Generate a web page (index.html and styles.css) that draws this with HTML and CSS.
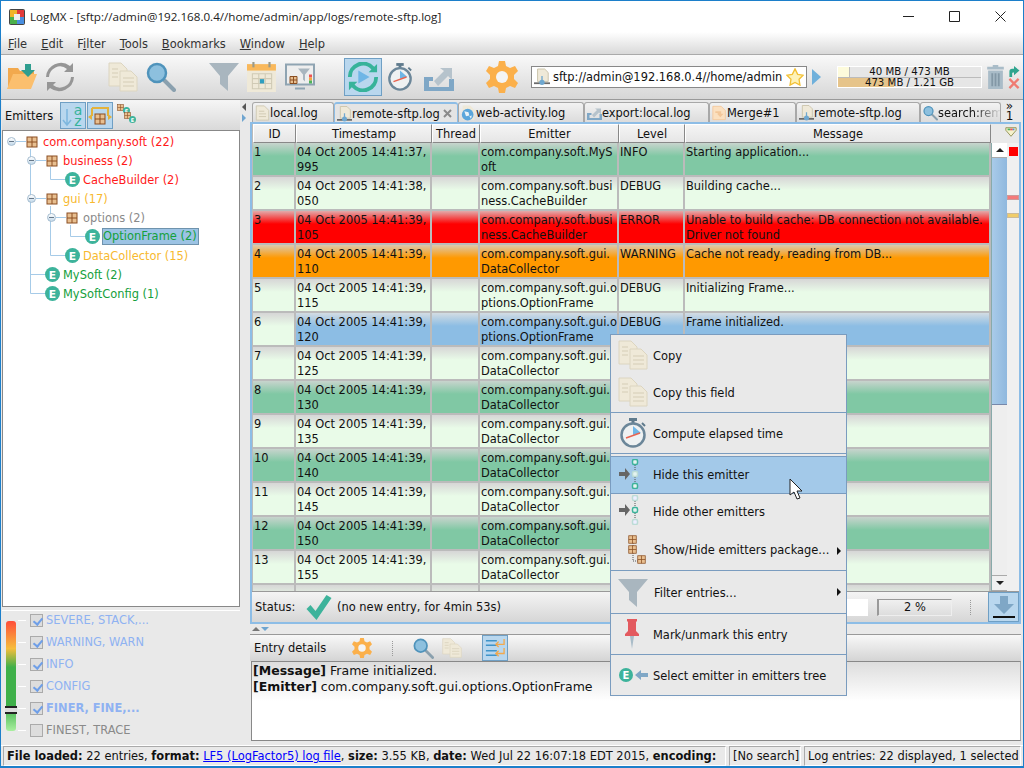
FILE: index.html
```html
<!DOCTYPE html>
<html>

<head lang="en">
    <meta charset="UTF-8">
    <title>LogMX</title>
    <link rel="stylesheet" href="styles.css">
</head>

<body>
    <!-- icon sheet -->
    <svg class="icon-sheet" width="0" height="0">
        <symbol id="i-folder" viewBox="0 0 30 26">
            <path d="M1 4h10l2 3h14v6H7L1 24z" fill="#f2a94e" />
            <path d="M6 10h24l-6 15H0z" fill="#fbbf6e" />
            <path d="M18 0h6v6h4l-7 7-7-7h4z" fill="#2f9e8f" />
        </symbol>
        <symbol id="i-refresh" viewBox="0 0 30 30">
            <path d="M4 15a11 11 0 0 1 18-8l-3 3h9V1l-3 3A15 15 0 0 0 1 15z" fill="#969696" />
            <path d="M26 15a11 11 0 0 1-18 8l3-3H2v9l3-3a15 15 0 0 0 24-11z" fill="#969696" />
        </symbol>
        <symbol id="i-docs" viewBox="0 0 30 30">
            <path d="M1 1h12l6 6v17H1z" fill="#efe9d8" stroke="#dcd5c0" />
            <path d="M12 9h11l6 6v14H12z" fill="#efe9d8" stroke="#dcd5c0" />
            <path d="M4 7h6M4 11h6M4 15h6M15 16h11M15 20h11M15 24h11" stroke="#d5cdb6" />
        </symbol>
        <symbol id="i-search" viewBox="0 0 30 30">
            <path d="M18 18l10 10" stroke="#8aa0ae" stroke-width="4" stroke-linecap="round" />
            <circle cx="11" cy="11" r="9" fill="#8dc0de" stroke="#4f93bb" stroke-width="2.5" />
        </symbol>
        <symbol id="i-funnel" viewBox="0 0 30 28">
            <path d="M0 0h30L19 13v15l-8-7v-8z" fill="#a9b6bf" />
        </symbol>
        <symbol id="i-calendar" viewBox="0 0 28 28">
            <rect y="2" width="27" height="26" fill="#efe9d8" />
            <rect y="2" width="27" height="6" fill="#f9b85b" />
            <rect x="5" width="2" height="5" fill="#9a9a8a" />
            <rect x="20" width="2" height="5" fill="#9a9a8a" />
            <path d="M5 11h18v14H5zM5 15.500h18M5 20h18M11 11v14M17 11v14" fill="none" stroke="#d0cab5" />
            <rect x="12" y="16" width="4" height="4" fill="#2f9fc0" />
        </symbol>
        <symbol id="i-monitor" viewBox="0 0 30 27">
            <rect x="1" y="1" width="28" height="20" fill="#eee" stroke="#8fa4b2" stroke-width="2" />
            <path d="M10 24h10v2H10z" fill="#8fa4b2" />
            <path d="M13 5h12l-5 6v7l-2-2v-5z" fill="#a9b6bf" />
            <path d="M5 13h7v7H5z" fill="#e8bf90" stroke="#8b4f22" />
            <path d="M8.500 13v7M5 16.500h7" stroke="#8b4f22" />
            <path d="M24 11h3v3h-3z" fill="#e55" />
            <path d="M24 14h3v3h-3z" fill="#f5a742" />
            <path d="M24 17h3v3h-3z" fill="#4db35a" />
        </symbol>
        <symbol id="i-sync" viewBox="0 0 32 32">
            <path d="M4 16a12 12 0 0 1 21-8l-3 3h9V2l-3 3A16 16 0 0 0 0 16z" fill="#37b39a" />
            <path d="M28 16a12 12 0 0 1-21 8l3-3H1v9l3-3a16 16 0 0 0 28-11z" fill="#37b39a" />
            <path d="M11 9l12 7-12 7z" fill="#6fb6e6" />
        </symbol>
        <symbol id="i-watch" viewBox="0 0 28 30">
            <rect x="10" width="8" height="3" fill="#5f7a8c" />
            <rect x="12.500" y="2" width="3" height="4" fill="#5f7a8c" />
            <path d="M23 5l3 3" stroke="#5f7a8c" stroke-width="2" />
            <circle cx="14" cy="17" r="11.500" fill="#eef1f2" stroke="#6b8699" stroke-width="2.500" />
            <path d="M14 8l8 7-8 2z" fill="#6fb6e6" />
            <path d="M7 20l14-5" stroke="#e8634f" stroke-width="1.500" />
        </symbol>
        <symbol id="i-export" viewBox="0 0 30 28">
            <path d="M0 14h9v4H5v6h20v-8h5v12H0z" fill="#7fa7c6" />
            <path d="M10 18l10-10-4-3h12v12l-4-4-10 10z" fill="#b6c3cc" />
        </symbol>
        <symbol id="i-gear" viewBox="0 0 32 32">
            <path d="M13 0h6l1 5 4 2 5-2 3 5-4 4v4l4 4-3 5-5-2-4 2-1 5h-6l-1-5-4-2-5 2-3-5 4-4v-4L0 10l3-5 5 2 4-2z" fill="#fbb04b" />
            <circle cx="16" cy="16" r="6" fill="#f4f4f4" />
        </symbol>
        <symbol id="i-netfile" viewBox="0 0 18 18">
            <path d="M4 0h8l4 4v10H4z" fill="#efe9d8" stroke="#c8c0a6" />
            <path d="M0 16h18" stroke="#6b6b6b" stroke-width="2" />
            <circle cx="9" cy="15" r="3" fill="#6fa8d0" />
            <path d="M9 8v5" stroke="#6fa8d0" stroke-width="1.500" />
        </symbol>
        <symbol id="i-file" viewBox="0 0 16 18">
            <path d="M1 1h9l5 5v11H1z" fill="#efe9d8" stroke="#cfc8b0" />
            <path d="M4 7h6M4 10h8M4 13h8" stroke="#cfc8b0" />
        </symbol>
        <symbol id="i-globe" viewBox="0 0 18 18">
            <path d="M2 0h9l5 5v12H2z" fill="#efe9d8" />
            <circle cx="8" cy="11" r="7" fill="#5aa6dc" />
            <path d="M4 7l5 1 1 4-4 1zM10 13l3-1-1 4z" fill="#e9f2f7" />
        </symbol>
        <symbol id="i-merge" viewBox="0 0 18 18">
            <path d="M1 1h10l5 5v11H1z" fill="#fbe0c0" stroke="#f3c79a" />
            <path d="M4 7h7v3h3l-4 4-4-4h1V9H4z" fill="#f3c79a" />
        </symbol>
        <symbol id="i-star" viewBox="0 0 20 20">
            <path d="M10 1l3 6 6 1-4.500 4.500 1 6.500-5.500-3-5.500 3 1-6.500L1 8l6-1z" fill="#fdf2b8" stroke="#f2c035" stroke-width="1.500" />
        </symbol>
        <symbol id="i-trash" viewBox="0 0 18 26">
            <path d="M6 0h6v2h6v3H0V2h6z" fill="#a9bcc8" />
            <path d="M1 6h16v20H1z" fill="#a9bcc8" />
            <path d="M5.500 9v14M9 9v14M12.500 9v14" stroke="#8398a6" stroke-width="2" />
        </symbol>
        <symbol id="i-pkg" viewBox="0 0 12 12">
            <rect x="1" y="1" width="10" height="10" fill="#e8bf90" stroke="#8b4f22" />
            <path d="M6 1v10M1 6h10" stroke="#8b4f22" />
        </symbol>
        <symbol id="i-emitter" viewBox="0 0 14 14">
            <circle cx="7" cy="7" r="7" fill="#3db39b" />
            <text x="7" y="11" text-anchor="middle" class="icon-e">E</text>
        </symbol>
        <symbol id="i-tick" viewBox="0 0 26 26">
            <path d="M1 15l4-4 5 6L21 1l5 3-15 22z" fill="#3db39b" />
        </symbol>
        <symbol id="i-hide" viewBox="0 0 30 30">
            <path d="M1 13h6V9l5 6-5 6v-4H1z" fill="#666" />
            <path d="M17 6v18" stroke="#555" stroke-dasharray="1 1" />
            <rect x="14.500" y=".5" width="5" height="5" rx="1.500" fill="#e4f3ef" stroke="#3db39b" stroke-width="1.500" />
            <rect x="14.500" y="12.500" width="5" height="5" rx="1.500" fill="#e4f3ef" stroke="#bcdcd6" stroke-width="1.500" />
            <rect x="14.500" y="24.500" width="5" height="5" rx="1.500" fill="#e4f3ef" stroke="#3db39b" stroke-width="1.500" />
        </symbol>
        <symbol id="i-hide-other" viewBox="0 0 30 30">
            <path d="M1 13h6V9l5 6-5 6v-4H1z" fill="#666" />
            <path d="M17 6v18" stroke="#555" stroke-dasharray="1 1" />
            <rect x="14.500" y=".5" width="5" height="5" rx="1.500" fill="#eef" stroke="#bcdcd6" stroke-width="1.500" />
            <rect x="14.500" y="12.500" width="5" height="5" rx="1.500" fill="#e4f3ef" stroke="#3db39b" stroke-width="1.500" />
            <rect x="14.500" y="24.500" width="5" height="5" rx="1.500" fill="#eef" stroke="#bcdcd6" stroke-width="1.500" />
        </symbol>
        <symbol id="i-pin" viewBox="0 0 14 30">
            <path d="M2 0h10v2l-1 1v9l3 3v2H0v-2l3-3V3L2 2z" fill="#e35a5f" />
            <path d="M5 17h4l-2 13z" fill="#a9bcc8" />
        </symbol>
        <symbol id="i-wrap" viewBox="0 0 22 22">
            <path d="M1 3h12M1 8h12M1 14h12M1 19h12" stroke="#3f94c9" stroke-width="1.500" />
            <path d="M21 1v6H12M15 4l-3 3 3 3M21 11v6H12M15 14l-3 3 3 3" fill="none" stroke="#f2a94e" stroke-width="1.500" />
        </symbol>
    </svg>

    <div class="window">
        <!-- title -->
        <header class="titlebar">
            <svg class="app-logo" width="16" height="16" viewBox="0 0 16 16">
                <rect width="16" height="16" rx="2" fill="#444" />
                <rect x="1" y="1" width="7" height="7" fill="#f0b428" />
                <rect x="8" y="1" width="7" height="7" fill="#e23b3b" />
                <rect x="1" y="8" width="7" height="7" fill="#4bb04a" />
                <rect x="8" y="8" width="7" height="7" fill="#4a8fe0" />
                <rect x="5" y="5" width="6" height="6" fill="#eee" />
            </svg>
            <span class="title-text">LogMX - [sftp://admin@192.168.0.4//home/admin/app/logs/remote-sftp.log]</span>
            <div class="win-buttons">
                <svg width="11" height="11" viewBox="0 0 11 11"><path d="M0 5.500h11" stroke="#222" /></svg>
                <svg width="11" height="11" viewBox="0 0 11 11"><path d="M.5.500h10v10H.5z" fill="none" stroke="#222" /></svg>
                <svg width="11" height="11" viewBox="0 0 11 11"><path d="M.5.500l10 10M10.500.500l-10 10" stroke="#222" /></svg>
            </div>
        </header>

        <!-- menu -->
        <nav class="menubar">
            <span><u>F</u>ile</span>
            <span><u>E</u>dit</span>
            <span>F<u>i</u>lter</span>
            <span><u>T</u>ools</span>
            <span><u>B</u>ookmarks</span>
            <span><u>W</u>indow</span>
            <span><u>H</u>elp</span>
        </nav>

        <!-- toolbar -->
        <div class="toolbar">
            <div class="tool-group">
                <svg class="tool"><use href="#i-folder" /></svg>
                <svg class="tool"><use href="#i-refresh" /></svg>
            </div>
            <div class="tool-group">
                <svg class="tool"><use href="#i-docs" /></svg>
                <svg class="tool"><use href="#i-search" /></svg>
            </div>
            <div class="tool-group">
                <svg class="tool"><use href="#i-funnel" /></svg>
                <svg class="tool"><use href="#i-calendar" /></svg>
                <svg class="tool"><use href="#i-monitor" /></svg>
            </div>
            <div class="tool-group tool-group-run">
                <div class="tool-on"><svg class="tool"><use href="#i-sync" /></svg></div>
                <svg class="tool tool-watch"><use href="#i-watch" /></svg>
                <svg class="tool tool-export"><use href="#i-export" /></svg>
            </div>
            <svg class="tool-gear"><use href="#i-gear" /></svg>
            <div class="url-box">
                <svg class="url-icon"><use href="#i-netfile" /></svg>
                <span class="url-text">sftp://admin@192.168.0.4//home/admin</span>
                <svg class="url-star"><use href="#i-star" /></svg>
            </div>
            <div class="url-go"></div>
            <div class="memory">
                <div class="mem-line"><i class="mem-fill mem-fill-a"></i><span>40 MB / 473 MB</span></div>
                <div class="mem-line"><i class="mem-fill mem-fill-b"></i><span>473 MB / 1.21 GB</span></div>
            </div>
            <svg class="tool-trash"><use href="#i-trash" /></svg>
            <div class="mini-actions">
                <svg width="12" height="11" viewBox="0 0 12 12"><path d="M1 12V6q0-3 3-3h2V0l6 5-6 5V7H5q-1 0-1 1v4z" fill="#2fa58f" /></svg>
                <svg width="12" height="11" viewBox="0 0 12 12"><path d="M1 1l10 10M11 1L1 11" stroke="#ef7b72" stroke-width="2.500" /></svg>
            </div>
        </div>

        <div class="main">
            <!-- left side -->
            <aside class="left">
                <div class="emitters-bar">
                    <span class="emitters-label">Emitters</span>
                    <div class="tool-on tool-on-small">
                        <svg width="22" height="24" viewBox="0 0 22 24">
                            <path d="M5 5v16M1 16l4 5 4-5" fill="none" stroke="#7db7de" stroke-width="1.500" />
                            <text x="16" y="11" text-anchor="middle" class="sort-a">a</text>
                            <text x="16" y="22" text-anchor="middle" class="sort-a">z</text>
                        </svg>
                    </div>
                    <div class="tool-on tool-on-small">
                        <svg width="24" height="22" viewBox="0 0 24 22">
                            <path d="M4 3h16v8M4 3v8" fill="none" stroke="#e3b23c" stroke-width="2" />
                            <path d="M0 12l4-3v6zM24 12l-4-3v6z" fill="#e3b23c" />
                            <use href="#i-pkg" x="6" y="8" width="12" height="12" />
                        </svg>
                    </div>
                    <svg class="emitters-hier" width="20" height="20" viewBox="0 0 20 20">
                        <use href="#i-pkg" width="7" height="7" />
                        <use href="#i-emitter" x="6" y="3" width="7" height="7" />
                        <use href="#i-pkg" x="7" y="8" width="7" height="7" />
                        <use href="#i-emitter" x="12" y="12" width="7" height="7" />
                    </svg>
                </div>

                <div class="tree">
                    <svg class="tree-lines" width="120" height="170">
                        <path d="M13 10.500H23M27.500 18v144.500H42M27.500 143.500H42M33 29.500H43M47.500 36v12.500H62M33 67.500H43M47.500 75v49.500H62M53 86.500H63M67.500 94v11.500H82" fill="none" stroke="#a6cbe8" />
                    </svg>
                    <div class="tree-row t0"><i class="toggle"></i><svg class="t-ic"><use href="#i-pkg" /></svg><span class="c-red">com.company.soft (22)</span></div>
                    <div class="tree-row t1"><i class="toggle"></i><svg class="t-ic"><use href="#i-pkg" /></svg><span class="c-red">business (2)</span></div>
                    <div class="tree-row t2"><svg class="t-em"><use href="#i-emitter" /></svg><span class="c-red">CacheBuilder (2)</span></div>
                    <div class="tree-row t1"><i class="toggle"></i><svg class="t-ic"><use href="#i-pkg" /></svg><span class="c-yellow">gui (17)</span></div>
                    <div class="tree-row t2b"><i class="toggle"></i><svg class="t-ic"><use href="#i-pkg" /></svg><span class="c-gray">options (2)</span></div>
                    <div class="tree-row t3"><svg class="t-em"><use href="#i-emitter" /></svg><span class="c-green tree-sel">OptionFrame (2)</span></div>
                    <div class="tree-row t2"><svg class="t-em"><use href="#i-emitter" /></svg><span class="c-yellow">DataCollector (15)</span></div>
                    <div class="tree-row t1b"><svg class="t-em"><use href="#i-emitter" /></svg><span class="c-green">MySoft (2)</span></div>
                    <div class="tree-row t1b"><svg class="t-em"><use href="#i-emitter" /></svg><span class="c-green">MySoftConfig (1)</span></div>
                </div>

                <div class="levels">
                    <div class="level-bar"><i class="level-knob"></i></div>
                    <div class="level-list">
                        <div class="level"><i class="level-tick"></i><b class="box on"></b>SEVERE, STACK,...</div>
                        <div class="level"><i class="level-tick"></i><b class="box on"></b>WARNING, WARN</div>
                        <div class="level"><i class="level-tick"></i><b class="box on"></b>INFO</div>
                        <div class="level"><i class="level-tick"></i><b class="box on"></b>CONFIG</div>
                        <div class="level level-bold"><i class="level-tick"></i><b class="box on"></b>FINER, FINE,...</div>
                        <div class="level level-off"><i class="level-tick"></i><b class="box"></b>FINEST, TRACE</div>
                    </div>
                </div>
            </aside>

            <div class="split-v">
                <i class="arrow-l"></i>
                <i class="arrow-r"></i>
            </div>

            <!-- right side -->
            <section class="right">
                <div class="tabs">
                    <div class="tab tab-a"><svg class="tab-ic"><use href="#i-file" /></svg>local.log</div>
                    <div class="tab tab-b tab-on"><svg class="tab-ic"><use href="#i-netfile" /></svg>remote-sftp.log<svg class="tab-x" width="9" height="9" viewBox="0 0 9 9"><path d="M1 1l7 7M8 1L1 8" stroke="#8a8a8a" stroke-width="2" /></svg></div>
                    <div class="tab tab-c"><svg class="tab-ic"><use href="#i-globe" /></svg>web-activity.log</div>
                    <div class="tab tab-d"><svg class="tab-ic"><use href="#i-export" /></svg>export:local.log</div>
                    <div class="tab tab-e"><svg class="tab-ic"><use href="#i-merge" /></svg>Merge#1</div>
                    <div class="tab tab-f"><svg class="tab-ic"><use href="#i-netfile" /></svg>remote-sftp.log</div>
                    <div class="tab tab-g"><svg class="tab-ic"><use href="#i-search" /></svg><span class="tab-fade">search:rem</span></div>
                    <div class="tab-more"><span>»</span><span>1</span></div>
                </div>

                <div class="tab-body">
                    <div class="log-area">
                        <div class="log-clip">
                            <table class="log">
                                <colgroup>
                                    <col class="c-id"><col class="c-ts"><col class="c-th"><col class="c-em"><col class="c-lv"><col class="c-ms">
                                </colgroup>
                                <thead>
                                    <tr><th>ID</th><th>Timestamp</th><th>Thread</th><th>Emitter</th><th>Level</th><th>Message</th></tr>
                                </thead>
                                <tbody>
                                    <tr class="r-info"><td>1</td><td>04 Oct 2005 14:41:37,<br>995</td><td></td><td>com.company.soft.MyS<br>oft</td><td>INFO</td><td>Starting application...</td></tr>
                                    <tr class="r-debug"><td>2</td><td>04 Oct 2005 14:41:38,<br>050</td><td></td><td>com.company.soft.busi<br>ness.CacheBuilder</td><td>DEBUG</td><td>Building cache...</td></tr>
                                    <tr class="r-error"><td>3</td><td>04 Oct 2005 14:41:39,<br>105</td><td></td><td>com.company.soft.busi<br>ness.CacheBuilder</td><td>ERROR</td><td>Unable to build cache: DB connection not available.<br>Driver not found</td></tr>
                                    <tr class="r-warn"><td>4</td><td>04 Oct 2005 14:41:39,<br>110</td><td></td><td>com.company.soft.gui.<br>DataCollector</td><td>WARNING</td><td>Cache not ready, reading from DB...</td></tr>
                                    <tr class="r-debug"><td>5</td><td>04 Oct 2005 14:41:39,<br>115</td><td></td><td>com.company.soft.gui.o<br>ptions.OptionFrame</td><td>DEBUG</td><td>Initializing Frame...</td></tr>
                                    <tr class="r-sel"><td>6</td><td>04 Oct 2005 14:41:39,<br>120</td><td></td><td>com.company.soft.gui.o<br>ptions.OptionFrame</td><td>DEBUG</td><td>Frame initialized.</td></tr>
                                    <tr class="r-debug"><td>7</td><td>04 Oct 2005 14:41:39,<br>125</td><td></td><td>com.company.soft.gui.<br>DataCollector</td><td>DEBUG</td><td></td></tr>
                                    <tr class="r-info"><td>8</td><td>04 Oct 2005 14:41:39,<br>130</td><td></td><td>com.company.soft.gui.<br>DataCollector</td><td>INFO</td><td></td></tr>
                                    <tr class="r-debug"><td>9</td><td>04 Oct 2005 14:41:39,<br>135</td><td></td><td>com.company.soft.gui.<br>DataCollector</td><td>DEBUG</td><td></td></tr>
                                    <tr class="r-info"><td>10</td><td>04 Oct 2005 14:41:39,<br>140</td><td></td><td>com.company.soft.gui.<br>DataCollector</td><td>INFO</td><td></td></tr>
                                    <tr class="r-debug"><td>11</td><td>04 Oct 2005 14:41:39,<br>145</td><td></td><td>com.company.soft.gui.<br>DataCollector</td><td>DEBUG</td><td></td></tr>
                                    <tr class="r-info"><td>12</td><td>04 Oct 2005 14:41:39,<br>150</td><td></td><td>com.company.soft.gui.<br>DataCollector</td><td>INFO</td><td></td></tr>
                                    <tr class="r-debug"><td>13</td><td>04 Oct 2005 14:41:39,<br>155</td><td></td><td>com.company.soft.gui.<br>DataCollector</td><td>DEBUG</td><td></td></tr>
                                    <tr class="r-debug r-cut"><td></td><td></td><td></td><td></td><td></td><td></td></tr>
                                </tbody>
                            </table>
                        </div>
                        <div class="scroll-side">
                            <div class="corner">
                                <svg width="12" height="12" viewBox="0 0 14 12">
                                    <path d="M1 1h12v3L7 11 1 4z" fill="#f6f2cc" stroke="#8a8a4a" />
                                    <path d="M3 2h3v2H3z" fill="#4db35a" /><path d="M6 2h3v2H6z" fill="#e55" /><path d="M9 2h2v2H9z" fill="#4a8fe0" />
                                </svg>
                            </div>
                            <div class="scroll-cols">
                                <div class="scrollbar">
                                    <div class="sb-btn"><i class="up"></i></div>
                                    <div class="sb-thumb"></div>
                                    <div class="sb-track"></div>
                                    <div class="sb-btn sb-down"><i class="down"></i></div>
                                </div>
                                <div class="markers">
                                    <i class="mark-red"></i>
                                    <i class="mark-pink"></i>
                                    <i class="mark-yellow"></i>
                                </div>
                            </div>
                        </div>
                    </div>

                    <div class="status-row">
                        <span class="status-label">Status:</span>
                        <svg class="status-tick"><use href="#i-tick" /></svg>
                        <span class="status-text">(no new entry, for 4min 53s)</span>
                        <div class="status-white"></div>
                        <div class="status-pct">2 %</div>
                        <i class="dots"></i>
                        <div class="tool-on tool-down">
                            <svg width="22" height="22" viewBox="0 0 22 22">
                                <path d="M7 0h8v8h6L11 18 1 8h6z" fill="#7fa7c6" />
                                <path d="M0 21h22" stroke="#111" stroke-width="2" />
                            </svg>
                        </div>
                    </div>
                </div>

                <div class="split-h"><i class="arrow-u"></i><i class="arrow-d"></i><i class="split-dots"></i></div>

                <div class="details-bar">
                    <span class="details-label">Entry details</span>
                    <svg class="dt-gear"><use href="#i-gear" /></svg>
                    <i class="dots"></i>
                    <svg class="dt-search"><use href="#i-search" /></svg>
                    <svg class="dt-docs"><use href="#i-docs" /></svg>
                    <div class="tool-on tool-wrap"><svg width="20" height="20"><use href="#i-wrap" /></svg></div>
                </div>
                <div class="details">
                    <div><b>[Message]</b> Frame initialized.</div>
                    <div><b>[Emitter]</b> com.company.soft.gui.options.OptionFrame</div>
                </div>
            </section>
        </div>

        <!-- status bar -->
        <footer class="statusbar">
            <div class="sb-field sb-main"><b>File loaded:</b> 22 entries, <b>format:</b> <a href="javascript:;">LF5 (LogFactor5) log file</a>, <b>size:</b> 3.55 KB, <b>date:</b> Wed Jul 22 16:07:18 EDT 2015, <b>encoding:</b></div>
            <div class="sb-field sb-search">[No search]</div>
            <div class="sb-field sb-entries">Log entries: 22 displayed, 1 selected</div>
        </footer>
    </div>

    <!-- popup menu -->
    <div class="popup">
        <div class="pm pm-copy"><svg class="pm-ic"><use href="#i-docs" /></svg>Copy</div>
        <div class="pm pm-copy2 pm-line"><svg class="pm-ic"><use href="#i-docs" /></svg>Copy this field</div>
        <div class="pm pm-time pm-line"><svg class="pm-ic"><use href="#i-watch" /></svg>Compute elapsed time</div>
        <div class="pm pm-gap"></div>
        <div class="pm pm-hide pm-hover pm-line"><svg class="pm-ic"><use href="#i-hide" /></svg>Hide this emitter</div>
        <div class="pm pm-other"><svg class="pm-ic"><use href="#i-hide-other" /></svg>Hide other emitters</div>
        <div class="pm pm-show pm-line">
            <svg class="pm-ic" viewBox="0 0 30 30">
                <path d="M14 8v18h6" fill="none" stroke="#555" stroke-dasharray="1 1" />
                <use href="#i-pkg" x="9" y="0" width="9" height="9" />
                <use href="#i-pkg" x="9" y="10" width="9" height="9" />
                <use href="#i-pkg" x="18" y="20" width="9" height="9" />
            </svg>
            <span class="pm-shift">Show/Hide emitters package...</span><i class="pm-arrow"></i>
        </div>
        <div class="pm pm-filter pm-line"><svg class="pm-ic"><use href="#i-funnel" /></svg><span class="pm-shift">Filter entries...</span><i class="pm-arrow"></i></div>
        <div class="pm pm-mark pm-line"><svg class="pm-ic"><use href="#i-pin" /></svg>Mark/unmark this entry</div>
        <div class="pm pm-select">
            <svg class="pm-ic" viewBox="0 0 30 14">
                <use href="#i-emitter" width="14" height="14" />
                <path d="M16 7l6-5v3h7v4h-7v3z" fill="#7fa7c6" />
            </svg>
            Select emitter in emitters tree
        </div>
    </div>

    <!-- mouse cursor -->
    <svg class="cursor" width="16" height="22" viewBox="0 0 16 22">
        <path d="M1 1v16l4-3 3 7 3-1-3-7h5z" fill="#fff" stroke="#222" />
    </svg>
</body>

</html>
```

FILE: styles.css
```css
* {
    padding: 0;
    margin: 0;
    box-sizing: border-box;
}

body {
    width: 1024px;
    height: 768px;
    overflow: hidden;
    position: relative;
    font-family: "DejaVu Sans", sans-serif;
    font-size: 11.45px;
    color: #111;
}

.icon-sheet {
    position: absolute;
}

.icon-e {
    font: bold 10px "DejaVu Sans", sans-serif;
    fill: #fff;
}

.sort-a {
    font: 14px "DejaVu Sans", sans-serif;
    fill: #37b39a;
}

.window {
    width: 1024px;
    height: 768px;
    display: flex;
    flex-direction: column;
    border: 1px solid #1c7fca;
    border-width: 1px 1px 2px 1px;
    background: #e9e9e9;
}

/* title */
.titlebar {
    height: 31px;
    flex: none;
    display: flex;
    align-items: center;
    background: #fff;
    padding-left: 8px;
}

.app-logo {
    margin-right: 5px;
}

.title-text {
    font-family: "Open Sans", sans-serif;
    font-size: 11.65px;
    color: #222;
    padding-bottom: 1px;
}

.win-buttons {
    margin-left: auto;
    display: flex;
    gap: 35px;
    padding-right: 17px;
}

/* menu */
.menubar {
    height: 23px;
    flex: none;
    display: flex;
    align-items: center;
    padding: 1px 0 0 7px;
    gap: 14px;
    font-size: 11.45px;
    color: #333;
    background: linear-gradient(#fff, #d9d9d9);
    border-bottom: 1px solid #aaa;
}

/* toolbar */
.toolbar {
    height: 45px;
    flex: none;
    display: flex;
    align-items: center;
    padding-left: 6px;
    background: linear-gradient(#f9f9f9, #d6d6d6);
    border-bottom: 1px solid #999;
}

.tool-group {
    display: flex;
    align-items: center;
    gap: 8px;
    margin-right: 33px;
}

.tool {
    width: 30px;
    height: 30px;
    flex: none;
}

.tool-group-run {
    gap: 5px;
    margin-right: 32px;
    margin-left: -4px;
}

.tool-watch {
    width: 26px;
    margin-right: 6px;
}

.tool-on {
    background: #b9d7ee;
    border: 1px solid #6f9fc4;
    width: 38px;
    height: 38px;
    display: flex;
    align-items: center;
    justify-content: center;
    flex: none;
}

.tool-gear {
    width: 32px;
    height: 32px;
    flex: none;
    margin-right: 13px;
}

.url-box {
    width: 276px;
    height: 22px;
    flex: none;
    display: flex;
    align-items: center;
    background: #fff;
    border: 1px solid #888;
    padding-left: 2px;
}

.url-icon {
    width: 16px;
    height: 18px;
    margin-right: 3px;
    flex: none;
}

.url-text {
    width: 233px;
    white-space: nowrap;
    overflow: hidden;
}

.url-star {
    width: 18px;
    height: 18px;
}

.url-go {
    margin-left: 5px;
    width: 0;
    height: 0;
    border-left: 9px solid #6fb0db;
    border-top: 8px solid transparent;
    border-bottom: 8px solid transparent;
    flex: none;
}

.memory {
    margin-left: 16px;
    width: 145px;
    height: 22px;
    flex: none;
    border: 1px solid #fff;
    font-size: 10.2px;
    background: #e6e6e6;
}

.mem-line {
    height: 10px;
    position: relative;
    text-align: center;
    line-height: 10px;
    white-space: nowrap;
}

.mem-line + .mem-line {
    border-top: 1px solid #bbb;
    height: 10px;
}

.mem-line span {
    position: relative;
}

.mem-fill {
    position: absolute;
    left: 0;
    top: 0;
    bottom: 0;
}

.mem-fill-a {
    width: 12px;
    background: #fdfbdc;
    border-right: 1px solid #bbb;
}

.mem-fill-b {
    width: 56px;
    background: #e6c48a;
}

.tool-trash {
    width: 17px;
    height: 24px;
    margin-left: 5px;
    flex: none;
}

.mini-actions {
    margin-left: 4px;
    display: flex;
    flex-direction: column;
    gap: 1px;
}

/* main split */
.main {
    flex: 1;
    display: flex;
    min-height: 0;
}

.left {
    width: 239px;
    flex: none;
    display: flex;
    flex-direction: column;
    padding-left: 1px;
    background: #e9e9e9;
    border-top: 1px solid #f4f4f4;
}

.emitters-bar {
    height: 29px;
    flex: none;
    display: flex;
    align-items: center;
    padding-left: 3px;
    gap: 1px;
    background: linear-gradient(#f5f5f5, #d9d9d9);
}

.emitters-label {
    width: 54px;
}

.tool-on-small {
    width: 26px;
    height: 27px;
}

.emitters-hier {
    margin-left: 3px;
    align-self: flex-start;
    margin-top: 3px;
}

.tree {
    height: 477px;
    flex: none;
    position: relative;
    background: #fff;
    border: 1px solid #888;
    padding-top: 1px;
}

.tree-lines {
    position: absolute;
    left: 0;
    top: 0;
}

.tree-row {
    height: 19px;
    display: flex;
    align-items: center;
    position: relative;
    white-space: nowrap;
}

.t0 { padding-left: 4px; }
.t1 { padding-left: 24px; }
.t2 { padding-left: 62px; }
.t2b { padding-left: 44px; }
.t3 { padding-left: 82px; }
.t1b { padding-left: 42px; }

.toggle {
    width: 9px;
    height: 9px;
    border-radius: 50%;
    background: linear-gradient(#fff, #c3d9ea);
    border: 1px solid #a6bdd0;
    margin-right: 10px;
    position: relative;
}

.toggle::after {
    content: "";
    position: absolute;
    left: 1px;
    right: 1px;
    top: 3px;
    height: 1px;
    background: #678;
}

.t-ic {
    width: 12px;
    height: 12px;
    margin-right: 5px;
    flex: none;
}

.t-em {
    width: 15px;
    height: 15px;
    margin-right: 3px;
    flex: none;
}

.c-red { color: #ff1a1a; }
.c-yellow { color: #f7b92f; }
.c-gray { color: #8a8a8a; }
.c-green { color: #14a03c; }

.tree-sel {
    background: #9cc3e4;
    border: 1px solid #6f93ad;
    margin-left: -1px;
    padding: 0 1px 0 0;
    line-height: 15px;
}

.levels {
    flex: 1;
    display: flex;
    padding: 10px 0 0 4px;
    border-top: 1px solid #fff;
    color: #8fb2f2;
    margin-top: 3px;
}

.level-bar {
    width: 10px;
    height: 110px;
    border-radius: 3px;
    position: relative;
    background: linear-gradient(#ff4d3a, #f6bd3c 25%, #3fb04a 42%, #3fb04a 78%, #a9ef9f);
    flex: none;
}

.level-knob {
    position: absolute;
    left: -1px;
    right: -1px;
    top: 85px;
    height: 8px;
    background: #ddd;
    border-top: 2px solid #222;
    border-bottom: 2px solid #222;
}

.level-list {
    margin: -12px 0 0 2px;
}

.level {
    height: 22px;
    display: flex;
    align-items: center;
    white-space: nowrap;
}

.level-tick {
    width: 8px;
    height: 1px;
    background: #fff;
    margin-right: 4px;
    flex: none;
}

.box {
    width: 13px;
    height: 13px;
    border: 1px solid #aaa;
    background: #ddd;
    margin-right: 3px;
    flex: none;
    position: relative;
}

.box.on::after {
    content: "";
    position: absolute;
    left: 4px;
    top: 1px;
    width: 4px;
    height: 7px;
    border: solid #6f9fe8;
    border-width: 0 2px 2px 0;
    transform: rotate(40deg);
}

.level-bold {
    font-weight: bold;
}

.level-off {
    color: #8a8a8a;
}

/* splitters */
.split-v {
    width: 10px;
    flex: none;
    padding: 3px 3px 0 0;
    background-image: radial-gradient(#bbb 35%, transparent 40%);
    background-size: 2px 2px;
    display: flex;
    flex-direction: column;
    gap: 3px;
    align-items: center;
}

.arrow-l {
    width: 0;
    height: 0;
    border-right: 4px solid #555;
    border-top: 4px solid transparent;
    border-bottom: 4px solid transparent;
}

.arrow-r {
    width: 0;
    height: 0;
    border-left: 4px solid #6fa5d0;
    border-top: 4px solid transparent;
    border-bottom: 4px solid transparent;
}

.right {
    flex: 1;
    min-width: 0;
    display: flex;
    flex-direction: column;
    padding-right: 2px;
}

.tabs {
    height: 22px;
    flex: none;
    display: flex;
    align-items: flex-end;
    padding-left: 2px;
    white-space: nowrap;
}

.tab {
    height: 20px;
    display: flex;
    align-items: center;
    background: linear-gradient(#f2f2f2, #dcdcdc);
    border: 1px solid #a8a8a8;
    border-bottom: 0;
    border-radius: 3px 3px 0 0;
    padding: 1px 0 0 2px;
    flex: none;
    overflow: hidden;
}

.tab-ic {
    width: 15px;
    height: 16px;
    flex: none;
}

.tab-on {
    background: #e4e4e4;
    border: 1px solid #8dbde6;
    border-top: 2px solid #8dbde6;
    border-bottom: 0;
}

.tab-x {
    margin-left: 3px;
}

.tab-a { width: 82px; }
.tab-b { width: 124px; }
.tab-c { width: 126px; }
.tab-d { width: 125px; }
.tab-e { width: 87px; }
.tab-f { width: 124px; }
.tab-g { width: 81px; }

.tab-fade {
    -webkit-mask-image: linear-gradient(90deg, #000 55%, transparent);
    mask-image: linear-gradient(90deg, #000 55%, transparent);
}

.tab-more {
    width: 17px;
    align-self: flex-start;
    display: flex;
    flex-direction: column;
    align-items: center;
    line-height: 10px;
    padding-top: 1px;
    font-size: 12px;
}

.tab-body {
    height: 502px;
    flex: none;
    border: 2px solid #8dbde6;
    display: flex;
    flex-direction: column;
}

.log-area {
    height: 467px;
    flex: none;
    display: flex;
    background: #fff;
}

.log-clip {
    width: 739px;
    flex: none;
    overflow: hidden;
    background: #bbb;
    padding-left: 1px;
}

.log {
    table-layout: fixed;
    width: 738px;
    border-collapse: separate;
    border-spacing: 0;
}

.c-id { width: 43px; }
.c-ts { width: 136px; }
.c-th { width: 48px; }
.c-em { width: 139px; }
.c-lv { width: 66px; }
.c-ms { width: 306px; }

.log th {
    height: 19px;
    font-weight: normal;
    background: linear-gradient(#f4f4f4, #e6e6e6);
    border-right: 1px solid #888;
    border-bottom: 1px solid #888;
    border-left: 1px solid #fff;
    border-top: 1px solid #fff;
    overflow: hidden;
    white-space: nowrap;
    line-height: 16px;
}

.log td {
    height: 34px;
    vertical-align: top;
    line-height: 15px;
    padding: 2px 0 0 1px;
    white-space: nowrap;
    overflow: hidden;
    border-right: 2px solid #bbb;
    border-bottom: 2px solid #bbb;
}

.r-info td {
    background: linear-gradient(#c8d4cd, #80c8a4 13px);
}

.r-debug td {
    background: linear-gradient(#d6d6d6, #e9fbe8 13px);
}

.r-error td {
    background: linear-gradient(#e2aaaa, #ff0000 13px);
}

.r-warn td {
    background: linear-gradient(#dcc9ae, #ff9900 13px);
}

.r-sel td {
    background: linear-gradient(#d3dce3, #8cbde4 13px);
}

.r-sel td:first-child {
    background: linear-gradient(#d6d6d6, #e9fbe8 13px);
}

.scroll-side {
    flex: 1;
    display: flex;
    flex-direction: column;
    background: #e9e9e9;
}

.corner {
    height: 19px;
    flex: none;
    text-align: right;
    padding: 2px 2px 0 0;
    background: #e9e9e9;
}

.scroll-cols {
    flex: 1;
    display: flex;
}

.scrollbar {
    width: 16px;
    flex: none;
    display: flex;
    flex-direction: column;
    border-left: 1px solid #8aa;
}

.sb-btn {
    height: 15px;
    flex: none;
    background: #fff;
    display: flex;
    align-items: center;
    justify-content: center;
    border-bottom: 1px solid #aaa;
}

.sb-down {
    border-top: 1px solid #aaa;
    height: 16px;
    background: #f0f0f0;
}

.sb-thumb {
    height: 247px;
    flex: none;
    background: linear-gradient(90deg, #a9cbe9, #8fb8de);
    border-bottom: 1px solid #78a;
}

.sb-track {
    flex: 1;
    background: #eee;
}

.up {
    width: 0;
    height: 0;
    border-bottom: 4px solid #222;
    border-left: 4px solid transparent;
    border-right: 4px solid transparent;
}

.down {
    width: 0;
    height: 0;
    border-top: 4px solid #222;
    border-left: 4px solid transparent;
    border-right: 4px solid transparent;
}

.markers {
    flex: 1;
    position: relative;
    background: #f0f0f0;
}

.markers i {
    position: absolute;
    display: block;
}

.mark-red {
    left: 2px;
    top: 4px;
    width: 9px;
    height: 9px;
    background: #f00;
}

.mark-pink {
    left: 0;
    top: 52px;
    width: 12px;
    height: 5px;
    background: #f47a7a;
    border: 1px solid #c99;
}

.mark-yellow {
    left: 0;
    top: 70px;
    width: 12px;
    height: 5px;
    background: #f0cd6a;
    border: 1px solid #cb9;
}

.status-row {
    flex: 1;
    display: flex;
    align-items: center;
    padding-left: 3px;
    background: linear-gradient(#f4f4f4, #d6d6d6);
    border-top: 1px solid #999;
}

.status-label {
    width: 50px;
}

.status-tick {
    width: 27px;
    height: 26px;
    flex: none;
}

.status-text {
    margin-left: 5px;
}

.status-white {
    margin-left: auto;
    width: 30px;
    height: 17px;
    background: #fff;
}

.status-pct {
    margin-left: 9px;
    width: 75px;
    height: 17px;
    text-align: center;
    line-height: 15px;
    border: 1px solid #eee;
    border-left: 2px solid #999;
    border-top: 1px solid #999;
    background: linear-gradient(#f0f0f0, #ddd);
}

.dots {
    display: block;
    width: 1px;
    height: 15px;
    margin: 0 17px 0 18px;
    background-image: linear-gradient(#999 50%, transparent 50%);
    background-size: 1px 2px;
    flex: none;
}

.tool-down {
    width: 31px;
    height: 30px;
    align-self: flex-end;
}

.split-h {
    height: 10px;
    flex: none;
    display: flex;
    align-items: center;
    padding-left: 2px;
    gap: 1px;
}

.arrow-u {
    width: 0;
    height: 0;
    border-bottom: 4px solid #777;
    border-left: 4px solid transparent;
    border-right: 4px solid transparent;
}

.arrow-d {
    width: 0;
    height: 0;
    border-top: 4px solid #6fa5d0;
    border-left: 4px solid transparent;
    border-right: 4px solid transparent;
}

.split-dots {
    flex: 1;
    height: 4px;
    margin: 0 3px;
    background-image: radial-gradient(#aaa 35%, transparent 40%);
    background-size: 2px 2px;
}

.details-bar {
    height: 27px;
    flex: none;
    display: flex;
    align-items: center;
    padding-left: 4px;
    background: linear-gradient(#f8f8f8, #d4d4d4);
    border-top: 1px solid #999;
}

.details-label {
    width: 98px;
}

.dt-gear {
    width: 20px;
    height: 20px;
}

.details-bar .dots {
    margin: 0 20px;
}

.dt-search {
    width: 21px;
    height: 21px;
    margin-right: 8px;
}

.dt-docs {
    width: 20px;
    height: 20px;
    margin-right: 20px;
}

.tool-wrap {
    width: 26px;
    height: 26px;
}

.details {
    height: 80px;
    flex: none;
    margin-left: 1px;
    border: 1px solid #888;
    border-right-color: #aaa;
    padding: 1px 0 0 1px;
    background: linear-gradient(#ddd, #fff 50%);
    font-size: 12.5px;
    line-height: 16px;
    color: #111;
}

/* status bar */
.statusbar {
    height: 21px;
    flex: none;
    display: flex;
    gap: 3px;
    padding: 0 2px 0 2px;
    background: #e9e9e9;
    border-top: 1px solid #fff;
}

.sb-field {
    border: 1px solid #aaa;
    border-right-color: #fff;
    border-bottom-color: #fff;
    white-space: nowrap;
    overflow: hidden;
    line-height: 18px;
    padding-left: 3px;
    height: 20px;
}

.sb-main { width: 723px; flex: none; }
.sb-search { width: 72px; flex: none; }
.sb-entries { flex: 1; }

.sb-field a {
    color: #00f;
}

/* popup */
.popup {
    position: absolute;
    left: 610px;
    top: 334px;
    width: 237px;
    height: 362px;
    background: #e9e9e9;
    border: 1px solid #7a9cbf;
    display: flex;
    flex-direction: column;
    white-space: nowrap;
}

.pm {
    position: relative;
    display: flex;
    align-items: center;
    padding: 2px 0 0 42px;
    flex: none;
}

.pm-line {
    border-bottom: 1px solid #7a9cbf;
}

.pm-ic {
    position: absolute;
    left: 7px;
    top: 5px;
    width: 30px;
    height: 30px;
}

.pm-copy { height: 39px; }
.pm-copy2 { height: 39px; padding-top: 0; }
.pm-copy2 .pm-ic { top: 3px; }
.pm-time { height: 41px; }
.pm-gap { height: 3px; padding: 0; border-bottom: 1px solid #7a9cbf; }
.pm-hide { height: 37px; padding-top: 0; }
.pm-hide .pm-ic { top: 2px; }
.pm-other { height: 38px; padding: 0 0 2px 42px; }
.pm-other .pm-ic { top: 1px; }
.pm-show { height: 39px; padding: 0 0 2px 42px; }
.pm-show .pm-ic { top: 3px; left: 8px; }
.pm-filter { height: 43px; }
.pm-filter .pm-ic { top: 7px; }
.pm-mark { height: 41px; }
.pm-mark .pm-ic { top: 5px; left: 14px; width: 14px; }
.pm-select { flex: 1; }
.pm-select .pm-ic { top: 13px; left: 8px; height: 14px; }

.pm-hover {
    background: #a3c9e9;
}

.pm-shift {
    margin-left: 1px;
}

.pm-arrow {
    position: absolute;
    right: 5px;
    top: 50%;
    margin-top: -4px;
    width: 0;
    height: 0;
    border-left: 4px solid #111;
    border-top: 4px solid transparent;
    border-bottom: 4px solid transparent;
}

.cursor {
    position: absolute;
    left: 789px;
    top: 478px;
}
```
